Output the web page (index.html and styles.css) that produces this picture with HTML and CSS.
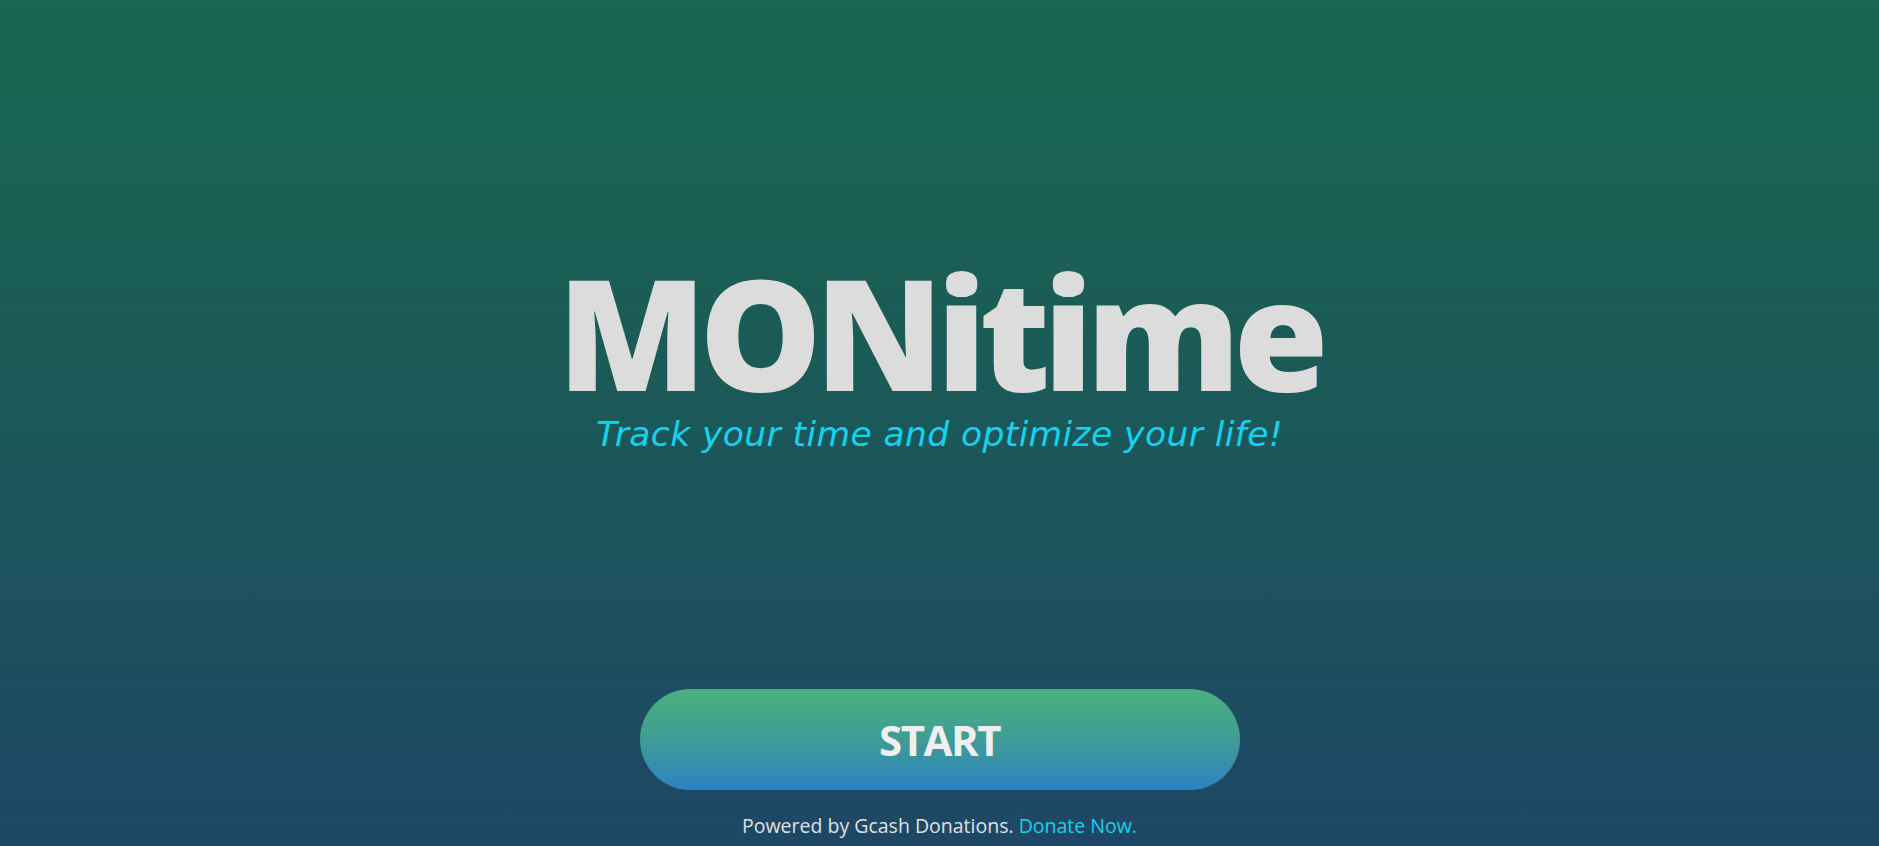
FILE: index.html
```html
<!DOCTYPE html>
<html lang="en">
<head>
<meta charset="utf-8">
<title>MONitime</title>
<link rel="stylesheet" href="styles.css">
</head>
<body>
<main class="page">
  <section class="hero">
    <h1 class="title">MONitime</h1>
    <p class="tagline">Track your time and optimize your life!</p>
  </section>
  <section class="actions">
    <button class="start">START</button>
    <p class="powered">Powered by Gcash Donations. <a class="donate" href="#">Donate Now.</a></p>
  </section>
</main>
</body>
</html>
```

FILE: styles.css
```css
html, body {
  margin: 0;
  padding: 0;
  height: 100%;
}
body {
  background: linear-gradient(to bottom, #196850 0%, #1b5a58 45%, #1e4765 100%);
  font-family: "Open Sans", sans-serif;
  overflow: hidden;
}
.page {
  height: 100vh;
  display: flex;
  flex-direction: column;
  align-items: center;
}
.hero {
  display: flex;
  flex-direction: column;
  align-items: center;
  padding-top: 254px;
}
.title {
  margin: 0;
  font-family: "Open Sans", sans-serif;
  font-weight: 800;
  font-size: 154px;
  line-height: 1;
  color: #dcdcdc;
  letter-spacing: -7px;
}
.tagline {
  margin: 6px 0 0 0;
  font-family: "DejaVu Sans", sans-serif;
  font-style: oblique;
  font-weight: 400;
  font-size: 34.5px;
  line-height: 1.2;
  color: #14d3ef;
  letter-spacing: 0.4px;
}
.actions {
  margin-top: auto;
  display: flex;
  flex-direction: column;
  align-items: center;
  padding-bottom: 8px;
}
.start {
  width: 600px;
  height: 101px;
  border: none;
  border-radius: 51px;
  background: linear-gradient(to bottom, #4cb07e 0%, #3f9c95 50%, #2c82c2 100%);
  color: #efefef;
  font-family: "Open Sans", sans-serif;
  font-weight: 700;
  font-size: 42px;
  letter-spacing: -1.5px;
  cursor: pointer;
  padding: 0;
}
.powered {
  margin: 24px 0 0 0;
  font-family: "Open Sans", sans-serif;
  font-size: 19.5px;
  line-height: 24px;
  color: #e0e0e0;
}
.donate {
  color: #16d2f0;
  text-decoration: none;
}
```
